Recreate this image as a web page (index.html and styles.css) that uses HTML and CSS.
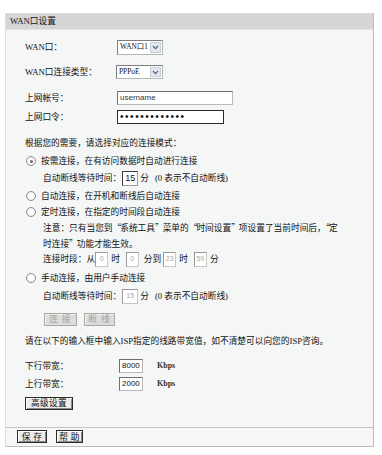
FILE: index.html
```html
<!DOCTYPE html>
<html lang="zh-CN">
<head>
<meta charset="utf-8">
<title>WAN口设置</title>
<link rel="stylesheet" href="styles.css">
</head>
<body>
<div class="panel">
  <div class="panel-head">WAN口设置</div>
  <div class="panel-body">
    <div class="row mt0">
      <span class="label">WAN口：</span>
      <div class="select s1"><span class="sel-text">WAN口1</span><span class="sel-arrow"><svg width="7" height="5" viewBox="0 0 7 5"><path d="M1 1 L3.5 3.6 L6 1" fill="none" stroke="#55657a" stroke-width="1.2"/></svg></span></div>
    </div>
    <div class="row mt11">
      <span class="label">WAN口连接类型：</span>
      <div class="select s2"><span class="sel-text">PPPoE</span><span class="sel-arrow"><svg width="7" height="5" viewBox="0 0 7 5"><path d="M1 1 L3.5 3.6 L6 1" fill="none" stroke="#55657a" stroke-width="1.2"/></svg></span></div>
    </div>
    <div class="row mt12">
      <span class="label">上网帐号：</span>
      <span class="input user">username</span>
    </div>
    <div class="row mt5">
      <span class="label">上网口令：</span>
      <span class="input pass">•••••••••••••</span>
    </div>
    <div class="row mt12">根据您的需要，请选择对应的连接模式：</div>
    <div class="row radio-row mt4"><span class="radio checked"></span>按需连接，在有访问数据时自动进行连接</div>
    <div class="row indent mt3">自动断线等待时间：<span class="box w15">15</span><span class="unit">分</span><span class="hint">(0 表示不自动断线)</span></div>
    <div class="row radio-row mt4"><span class="radio"></span>自动连接，在开机和断线后自动连接</div>
    <div class="row radio-row mt2"><span class="radio"></span>定时连接，在指定的时间段自动连接</div>
    <p class="note">注意：只有当您到<span class="q">“</span>系统工具<span class="q">”</span>菜单的<span class="q">“</span>时间设置<span class="q">”</span>项设置了当前时间后，<span class="q">“</span>定<br>时连接<span class="q">”</span>功能才能生效。</p>
    <div class="row indent mt0">连接时段：从<span class="box dis w13">0</span><span class="sep">时</span><span class="box dis w13 gap">0</span><span class="sep2">分到</span><span class="box dis w13">23</span><span class="sep">时</span><span class="box dis w13 gap">59</span><span class="sep">分</span></div>
    <div class="row radio-row mt5"><span class="radio"></span>手动连接，由用户手动连接</div>
    <div class="row indent mt4">自动断线等待时间：<span class="box dis w15">15</span><span class="unit">分</span><span class="hint">(0 表示不自动断线)</span></div>
    <div class="row btn-row mt9"><span class="btn disabled b-conn">连 接</span><span class="btn disabled b-disc">断 线</span></div>
    <div class="row mt8">请在以下的输入框中输入ISP指定的线路带宽值，如不清楚可以向您的ISP咨询。</div>
    <div class="row mt11">
      <span class="label bw">下行带宽：</span>
      <span class="input bw-in">8000</span>
      <span class="kbps">Kbps</span>
    </div>
    <div class="row mt4">
      <span class="label bw">上行带宽：</span>
      <span class="input bw-in">2000</span>
      <span class="kbps">Kbps</span>
    </div>
    <div class="row mt5"><span class="btn b-adv">高级设置</span></div>
  </div>
  <div class="panel-foot">
    <span class="btn b-save">保 存</span>
    <span class="btn b-help">帮 助</span>
  </div>
</div>
</body>
</html>
```

FILE: styles.css
```css
body {
  margin: 0;
  background: #ffffff;
  color: #111111;
  font-family: "Liberation Serif", "Noto Sans CJK SC", serif;
  font-size: 8.7px;
  line-height: 14px;
}

.panel {
  margin: 13px 0 0 5px;
  width: 369px;
  box-sizing: border-box;
  background: #f5f7f6;
  border-left: 1px solid #dedede;
  border-right: 1px solid #bcbcbc;
  border-bottom: 1px solid #bcbcbc;
}

.panel-head {
  height: 17px;
  line-height: 17px;
  padding-left: 4px;
  background: #d6d6d6;
  border-bottom: 1px solid #e4e4e4;
  box-sizing: border-box;
}

.panel-body {
  padding: 10px 0 17px 19px;
}

.row {
  display: flex;
  align-items: center;
  height: 14px;
  white-space: nowrap;
}

.mt0 { margin-top: 0; }
.mt2 { margin-top: 2px; }
.mt3 { margin-top: 3px; }
.mt4 { margin-top: 4px; }
.mt5 { margin-top: 5px; }
.mt8 { margin-top: 8px; }
.mt9 { margin-top: 9px; }
.mt11 { margin-top: 11px; }
.mt12 { margin-top: 12px; }

.label {
  width: 92px;
  flex: none;
}

.label.bw {
  width: 94px;
}

.select {
  display: flex;
  align-items: center;
  justify-content: space-between;
  height: 15px;
  box-sizing: border-box;
  border: 1px solid #7d7d7d;
  border-right-color: #b5b5b5;
  border-bottom-color: #b5b5b5;
  background: #ffffff;
  padding: 0 1px 0 2px;
}

.select.s1 { width: 46px; }
.select.s2 { width: 47px; margin-left: -1px; height: 14px; }

.sel-text {
  font-size: 7.4px;
  letter-spacing: 0;
}

.sel-arrow {
  display: flex;
  align-items: center;
  justify-content: center;
  width: 11px;
  height: 11px;
  box-sizing: border-box;
  background: #e3e8ee;
  border: 1px solid #c7cfd9;
  flex: none;
}

.s2 .sel-arrow { height: 10px; }

.input {
  display: flex;
  align-items: center;
  height: 14px;
  box-sizing: border-box;
  background: #ffffff;
  border: 1px solid #6f6f6f;
  border-right-color: #b8b8b8;
  border-bottom-color: #b8b8b8;
  padding-left: 2px;
  font-family: "Liberation Sans", "Noto Sans CJK SC", sans-serif;
  font-size: 8px;
}

.input.user {
  width: 116px;
  color: #333;
}

.input.pass {
  width: 107px;
  border: 1px solid #2a2a2a;
  font-size: 10px;
  letter-spacing: 1.55px;
  color: #111;
}

.input.bw-in {
  width: 24px;
  color: #111;
}

.kbps {
  margin-left: 14px;
  font-weight: bold;
  font-size: 8px;
  color: #333;
}

.radio-row {
  padding-left: 1px;
}

.radio {
  width: 10px;
  height: 10px;
  box-sizing: border-box;
  border: 1px solid #8c8c8c;
  border-radius: 50%;
  background: radial-gradient(circle at 50% 50%, #ffffff 40%, #e6e6e6 100%);
  margin-right: 5px;
  flex: none;
  position: relative;
}

.radio.checked::after {
  content: "";
  position: absolute;
  left: 2.5px;
  top: 2.5px;
  width: 3px;
  height: 3px;
  border-radius: 50%;
  background: #6a6a6a;
}

.indent {
  padding-left: 18px;
}

.box {
  display: flex;
  align-items: center;
  justify-content: center;
  height: 15px;
  box-sizing: border-box;
  background: #ffffff;
  border: 1px solid #3c3c3c;
  border-right-color: #9a9a9a;
  border-bottom-color: #9a9a9a;
  font-family: "Liberation Sans", sans-serif;
  font-size: 9px;
  flex: none;
}

.box.w15 { width: 16px; margin-left: 1px; }
.box.w13 { width: 13px; }
.box.gap { margin-left: 6px; }

.box.dis {
  color: #a8a8a8;
  border-color: #9a9a9a #c8c8c8 #c8c8c8 #9a9a9a;
  font-size: 7px;
}

.unit { margin-left: 2px; }
.hint { margin-left: 6px; }
.sep { margin-left: 3px; }
.sep2 { margin-left: 5px; margin-right: 2px; }

.note {
  margin: 1px 0 0;
  padding-left: 18px;
  line-height: 15px;
  white-space: nowrap;
}

.q {
  font-family: "Noto Sans CJK SC", sans-serif;
  letter-spacing: -1px;
}

.btn-row {
  padding-left: 19px;
  gap: 7px;
}

.btn {
  display: flex;
  align-items: center;
  justify-content: center;
  height: 13px;
  box-sizing: border-box;
  background: #ececec;
  border: 1px solid #2b2b2b;
  box-shadow: inset 1px 1px 0 #ffffff, inset -1px -1px 0 #8a8a8a;
  color: #111;
  letter-spacing: 0.3px;
}

.btn.disabled {
  background: #dcdcdc;
  color: #a2a2a2;
  border-color: #a9a9a9;
  box-shadow: inset 1px 1px 0 #f4f4f4;
  letter-spacing: 1px;
}

.b-conn { width: 33px; }
.b-disc { width: 31px; }
.b-adv { width: 48px; }
.b-save { width: 30px; }
.b-help { width: 27px; }

.panel-foot {
  display: flex;
  align-items: flex-start;
  gap: 9px;
  height: 19px;
  box-sizing: border-box;
  padding: 2px 0 0 11px;
  border-top: 1px solid #c6c6c6;
}
```
